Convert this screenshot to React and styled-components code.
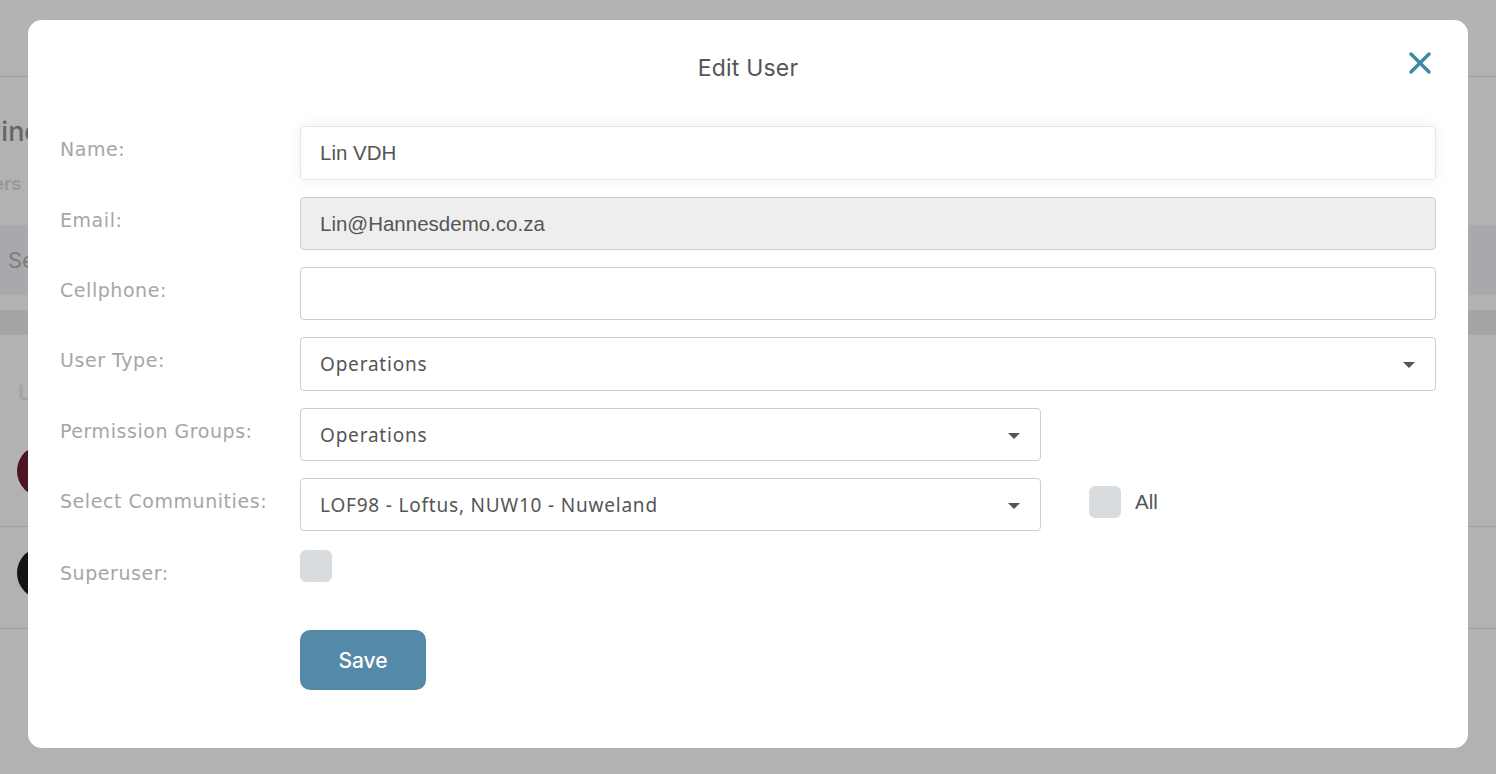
import React from 'react';
import styled, { createGlobalStyle } from 'styled-components';

const GlobalStyle = createGlobalStyle`
  * { box-sizing: border-box; }
  html, body { margin: 0; padding: 0; background: #ffffff; }
  body { font-family: "Inter", "Noto Sans", sans-serif; overflow: hidden; }
`;

/* ---------- page behind the modal ---------- */

const Page = styled.div`
  height: 774px;
  overflow: hidden;
  background: #ffffff;
`;

const TopBar = styled.header`
  height: 77px;
  border-bottom: 1px solid #e4e4e4;
`;

const Content = styled.main`
  margin-left: -46px;
`;

const Heading = styled.h1`
  margin: 38px 0 0 30px;
  font-size: 27px;
  font-weight: 500;
  color: #929292;
  line-height: 34px;
`;

const Subtitle = styled.p`
  margin: 24px 0 0 16px;
  font-size: 18px;
  font-weight: 700;
  color: #dcdcdc;
`;

const SearchBar = styled.div`
  margin-top: 31px;
  height: 70px;
  display: flex;
  align-items: center;
  padding-left: 54px;
  background: #f1f3f7;
  color: #b2b2b2;
  font-size: 22px;
`;

const Divider = styled.div`
  margin-top: 15px;
  height: 25px;
  background: #ededed;
`;

const TableHead = styled.div`
  height: 90px;
  display: flex;
  align-items: flex-end;
  padding: 0 0 20px 64px;
  color: #eaeaea;
  font-size: 20px;
  font-weight: 600;
`;

const Row = styled.div`
  height: 102px;
  display: flex;
  align-items: flex-start;
  padding: 20px 0 0 63px;
  border-bottom: 1px solid #e4e4e4;
`;

const Avatar = styled.div`
  width: 52px;
  height: 52px;
  border-radius: 50%;
  background: ${p => p.color};
`;

/* ---------- modal ---------- */

const Backdrop = styled.div`
  position: fixed;
  inset: 0;
  background: rgba(0, 0, 0, 0.3);
  display: flex;
  align-items: flex-start;
  justify-content: center;
  padding: 20px 28px;
`;

const Modal = styled.div`
  width: 100%;
  background: #ffffff;
  border-radius: 14px;
  padding: 32px 32px 58px;
`;

const ModalHeader = styled.div`
  display: grid;
  grid-template-columns: 1fr auto 1fr;
  align-items: center;
  height: 32px;
  margin-bottom: 42px;
`;

const Title = styled.h2`
  grid-column: 2;
  margin: 0;
  font-size: 23px;
  font-weight: 400;
  color: #555555;
  letter-spacing: 0.2px;
`;

const CloseButton = styled.button`
  justify-self: end;
  margin: -10px 4px 0 0;
  padding: 0;
  border: none;
  background: none;
  width: 24px;
  height: 24px;
  cursor: pointer;
  display: flex;
  align-items: center;
  justify-content: center;
`;

const Form = styled.form`
  display: flex;
  flex-direction: column;
  gap: 17px;
`;

const FormRow = styled.div`
  display: flex;
  align-items: flex-start;
  min-height: 53px;
`;

const Label = styled.label`
  width: 240px;
  flex-shrink: 0;
  padding-top: ${p => (p.low ? '13px' : '11px')};
  font-family: "DejaVu Sans", sans-serif;
  font-size: 19px;
  letter-spacing: 0.55px;
  color: #a6a6a6;
  line-height: 24px;
  white-space: nowrap;
`;

const FieldGroup = styled.div`
  flex: 1;
  display: flex;
  align-items: center;
  gap: 48px;
`;

const TextInput = styled.input`
  width: 100%;
  height: ${p => (p.tall ? '54px' : '53px')};
  padding: 0 19px;
  border: 1px solid ${p => (p.focused ? '#e6e6e6' : '#cdcdcd')};
  border-radius: 4px;
  background: ${p => (p.disabled ? '#eeeeee' : '#ffffff')};
  box-shadow: ${p => (p.focused ? '0 0 14px rgba(0, 0, 0, 0.07)' : 'none')};
  font-family: "Liberation Sans", Arial, sans-serif;
  font-size: 20.5px;
  color: #555555;
  outline: none;
  -webkit-text-fill-color: #555555;
  opacity: 1;
`;

const SelectBox = styled.div`
  width: ${p => (p.half ? '741px' : '100%')};
  flex-shrink: 0;
  height: ${p => (p.half ? '53px' : '54px')};
  display: flex;
  align-items: center;
  justify-content: space-between;
  padding: 0 20px 0 19px;
  border: 1px solid #cdcdcd;
  border-radius: 4px;
  background: #ffffff;
  font-family: "Noto Sans", sans-serif;
  font-size: 19px;
  letter-spacing: 0.8px;
  color: #555555;
`;

const Caret = styled.span`
  width: 0;
  height: 0;
  border-left: 6px solid transparent;
  border-right: 6px solid transparent;
  border-top: 6px solid #555555;
  margin-top: 2px;
`;

const CheckBox = styled.span`
  width: 32px;
  height: 32px;
  flex-shrink: 0;
  border-radius: 6px;
  background: #d9dcdf;
  margin-top: ${p => p.offset || '0'};
`;

const CheckLabel = styled.label`
  display: flex;
  align-items: center;
  gap: 14px;
  margin-top: -5px;
  font-family: "Liberation Sans", Arial, sans-serif;
  font-size: 20.5px;
  color: #555555;
`;

const Actions = styled.div`
  margin-top: 29px;
  padding-left: 240px;
`;

const SaveButton = styled.button`
  width: 126px;
  height: 60px;
  border: none;
  border-radius: 10px;
  background: #548aa8;
  color: #ffffff;
  font-family: "Inter", sans-serif;
  font-size: 21px;
  font-weight: 500;
  cursor: pointer;
`;

const CloseIcon = () => (
  <svg width="22" height="22" viewBox="0 0 22 22" fill="none">
    <path d="M2 2L20 20M20 2L2 20" stroke="#3b8aa6" strokeWidth="3.4" strokeLinecap="round" />
  </svg>
);

const Select = ({ value, half }) => (
  <SelectBox half={half} role="combobox">
    <span>{value}</span>
    <Caret />
  </SelectBox>
);

export default function App() {
  return (
    <>
      <GlobalStyle />
      <Page>
        <TopBar />
        <Content>
          <Heading>Pinecrest Estate</Heading>
          <Subtitle>Users</Subtitle>
          <SearchBar>Search</SearchBar>
          <Divider />
          <TableHead>User</TableHead>
          <Row><Avatar color="#701c2e" /></Row>
          <Row><Avatar color="#1f1d1f" /></Row>
        </Content>
      </Page>

      <Backdrop>
        <Modal>
          <ModalHeader>
            <Title>Edit User</Title>
            <CloseButton type="button" aria-label="Close"><CloseIcon /></CloseButton>
          </ModalHeader>

          <Form onSubmit={e => e.preventDefault()}>
            <FormRow>
              <Label>Name:</Label>
              <FieldGroup><TextInput tall focused defaultValue="Lin VDH" /></FieldGroup>
            </FormRow>
            <FormRow>
              <Label>Email:</Label>
              <FieldGroup><TextInput disabled defaultValue="Lin@Hannesdemo.co.za" /></FieldGroup>
            </FormRow>
            <FormRow>
              <Label>Cellphone:</Label>
              <FieldGroup><TextInput defaultValue="" /></FieldGroup>
            </FormRow>
            <FormRow>
              <Label>User Type:</Label>
              <FieldGroup><Select value="Operations" /></FieldGroup>
            </FormRow>
            <FormRow>
              <Label>Permission Groups:</Label>
              <FieldGroup><Select half value="Operations" /></FieldGroup>
            </FormRow>
            <FormRow>
              <Label>Select Communities:</Label>
              <FieldGroup>
                <Select half value="LOF98 - Loftus, NUW10 - Nuweland" />
                <CheckLabel><CheckBox />All</CheckLabel>
              </FieldGroup>
            </FormRow>
            <FormRow>
              <Label low>Superuser:</Label>
              <FieldGroup><CheckBox offset="2px" /></FieldGroup>
            </FormRow>
          </Form>

          <Actions>
            <SaveButton type="button">Save</SaveButton>
          </Actions>
        </Modal>
      </Backdrop>
    </>
  );
}
